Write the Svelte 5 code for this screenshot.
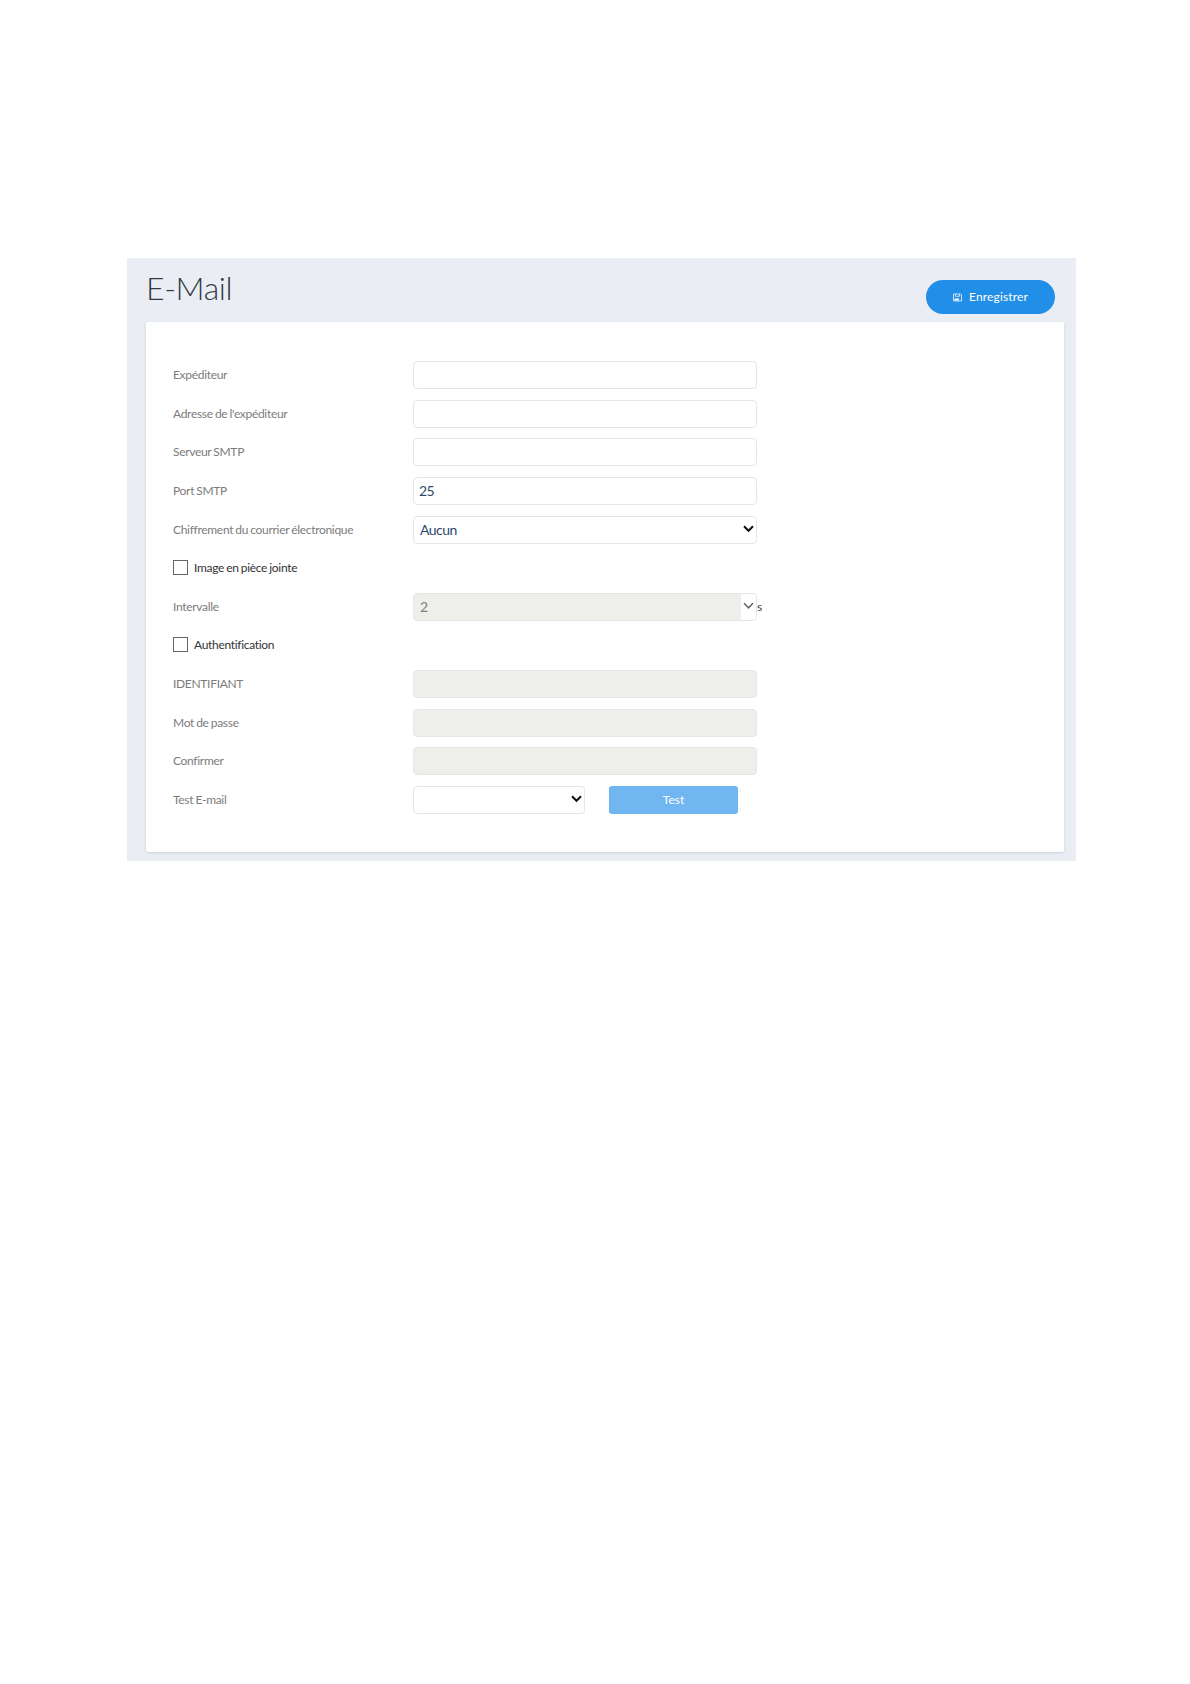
<script lang="ts">
  type Row = {
    label: string
    kind: "text" | "select" | "check" | "interval" | "test"
    value?: string
    disabled?: boolean
  }

  const rows: Row[] = [
    { label: "Expéditeur", kind: "text" },
    { label: "Adresse de l'expéditeur", kind: "text" },
    { label: "Serveur SMTP", kind: "text" },
    { label: "Port SMTP", kind: "text", value: "25" },
    { label: "Chiffrement du courrier électronique", kind: "select", value: "Aucun" },
    { label: "Image en pièce jointe", kind: "check" },
    { label: "Intervalle", kind: "interval", value: "2", disabled: true },
    { label: "Authentification", kind: "check" },
    { label: "IDENTIFIANT", kind: "text", disabled: true },
    { label: "Mot de passe", kind: "text", disabled: true },
    { label: "Confirmer", kind: "text", disabled: true },
    { label: "Test E-mail", kind: "test" },
  ]
</script>

{#snippet chevron()}
  <svg class="chevron" viewBox="0 0 11 8" width="11" height="8">
    <path d="M1 1.3 L5.5 5.8 L10 1.3" />
  </svg>
{/snippet}

<main class="page">
  <header>
    <h1>E-Mail</h1>
    <button class="save">
      <svg viewBox="0 0 9 9" width="9" height="9">
        <path d="M.5 1 H7.5 L8.5 2 V8 H.5 Z M2.5 1 V3.3 H6.5 V1" />
        <path class="disk-label" d="M1.5 5.5 H6 V7.5 H1.5 Z" />
      </svg>
      <span>Enregistrer</span>
    </button>
  </header>

  <section class="card">
    {#each rows as row}
      <div class="row">
        {#if row.kind === "check"}
          <label class="check"><span class="box"></span>{row.label}</label>
        {:else}
          <span class="label">{row.label}</span>
          {#if row.kind === "text"}
            <div class="field" class:disabled={row.disabled}>{row.value ?? ""}</div>
          {:else if row.kind === "select"}
            <div class="field select">{row.value}{@render chevron()}</div>
          {:else if row.kind === "interval"}
            <div class="field select interval disabled">
              {row.value}
              <span class="arrow">{@render chevron()}</span>
            </div>
            <span class="unit">s</span>
          {:else}
            <div class="field select short">{@render chevron()}</div>
            <button class="test">Test</button>
          {/if}
        {/if}
      </div>
    {/each}
  </section>
</main>

<style>
  :global(body) {
    background: #fff;
  }

  .page {
    box-sizing: border-box;
    width: 949px;
    height: 603px;
    margin: 258px 0 0 127px;
    padding: 0 12px 0 19px;
    background: #eaeef4;
    font-family: Lato, "Liberation Sans", sans-serif;
  }

  header {
    display: flex;
    justify-content: space-between;
    height: 64px;
  }

  h1 {
    margin: 10px 0 0;
    font-size: 32px;
    line-height: 40px;
    font-weight: 300;
    letter-spacing: -0.4px;
    color: #303a44;
  }

  button {
    display: flex;
    align-items: center;
    justify-content: center;
    padding: 0;
    border: none;
    color: #fff;
    font-family: inherit;
    font-size: 12px;
  }

  .save {
    gap: 7px;
    width: 129px;
    height: 34px;
    margin: 22px 9px 0 0;
    border-radius: 17px;
    background: #218ee8;
    letter-spacing: 0.15px;
  }

  .save span {
    margin-bottom: 1px;
  }

  .save svg {
    fill: none;
    stroke: #c4e2fc;
    stroke-width: 1;
  }

  .save .disk-label {
    fill: #fff;
    stroke: none;
  }

  .card {
    box-sizing: border-box;
    height: 530px;
    padding: 39px 27px 0;
    border-radius: 2px;
    background: #fff;
    box-shadow: 0 1px 3px rgba(90, 100, 130, 0.22);
  }

  .row {
    display: flex;
    align-items: center;
    height: 28px;
    margin-bottom: 10.64px;
  }

  .label,
  .check {
    font-size: 12px;
    letter-spacing: -0.31px;
    word-spacing: -0.6px;
    white-space: nowrap;
  }

  .label {
    width: 240px;
    color: #7c7c7c;
    line-height: 28px;
  }

  .field {
    box-sizing: border-box;
    display: flex;
    align-items: center;
    width: 344px;
    height: 28px;
    padding: 0 5px;
    border: 1px solid #e4e6e8;
    border-radius: 4px;
    background: #fff;
    color: #2f4a6b;
    font-size: 14px;
    letter-spacing: -0.5px;
  }

  .select {
    justify-content: space-between;
    padding: 0 2px 0 6px;
  }

  .disabled {
    background: #eeeeea;
    color: #7f7f7f;
  }

  .interval {
    padding-right: 0;
  }

  .arrow {
    display: flex;
    align-items: center;
    justify-content: center;
    width: 15px;
    height: 26px;
    border-radius: 0 3px 3px 0;
    background: #fff;
  }

  .chevron {
    margin-bottom: 1px;
    fill: none;
    stroke: #111;
    stroke-width: 2;
  }

  .interval .chevron {
    stroke: #666;
    stroke-width: 1.6;
  }

  .unit {
    color: #444;
    font-size: 12px;
  }

  .short {
    justify-content: flex-end;
    width: 172px;
  }

  .test {
    width: 129px;
    height: 28px;
    margin-left: 24px;
    border-radius: 3px;
    background: #70b6f0;
  }

  .check {
    display: flex;
    align-items: center;
    gap: 6px;
    margin-bottom: 2px;
    color: #333;
  }

  .box {
    box-sizing: border-box;
    width: 15px;
    height: 15px;
    border: 1px solid #666;
    background: #fff;
  }
</style>
